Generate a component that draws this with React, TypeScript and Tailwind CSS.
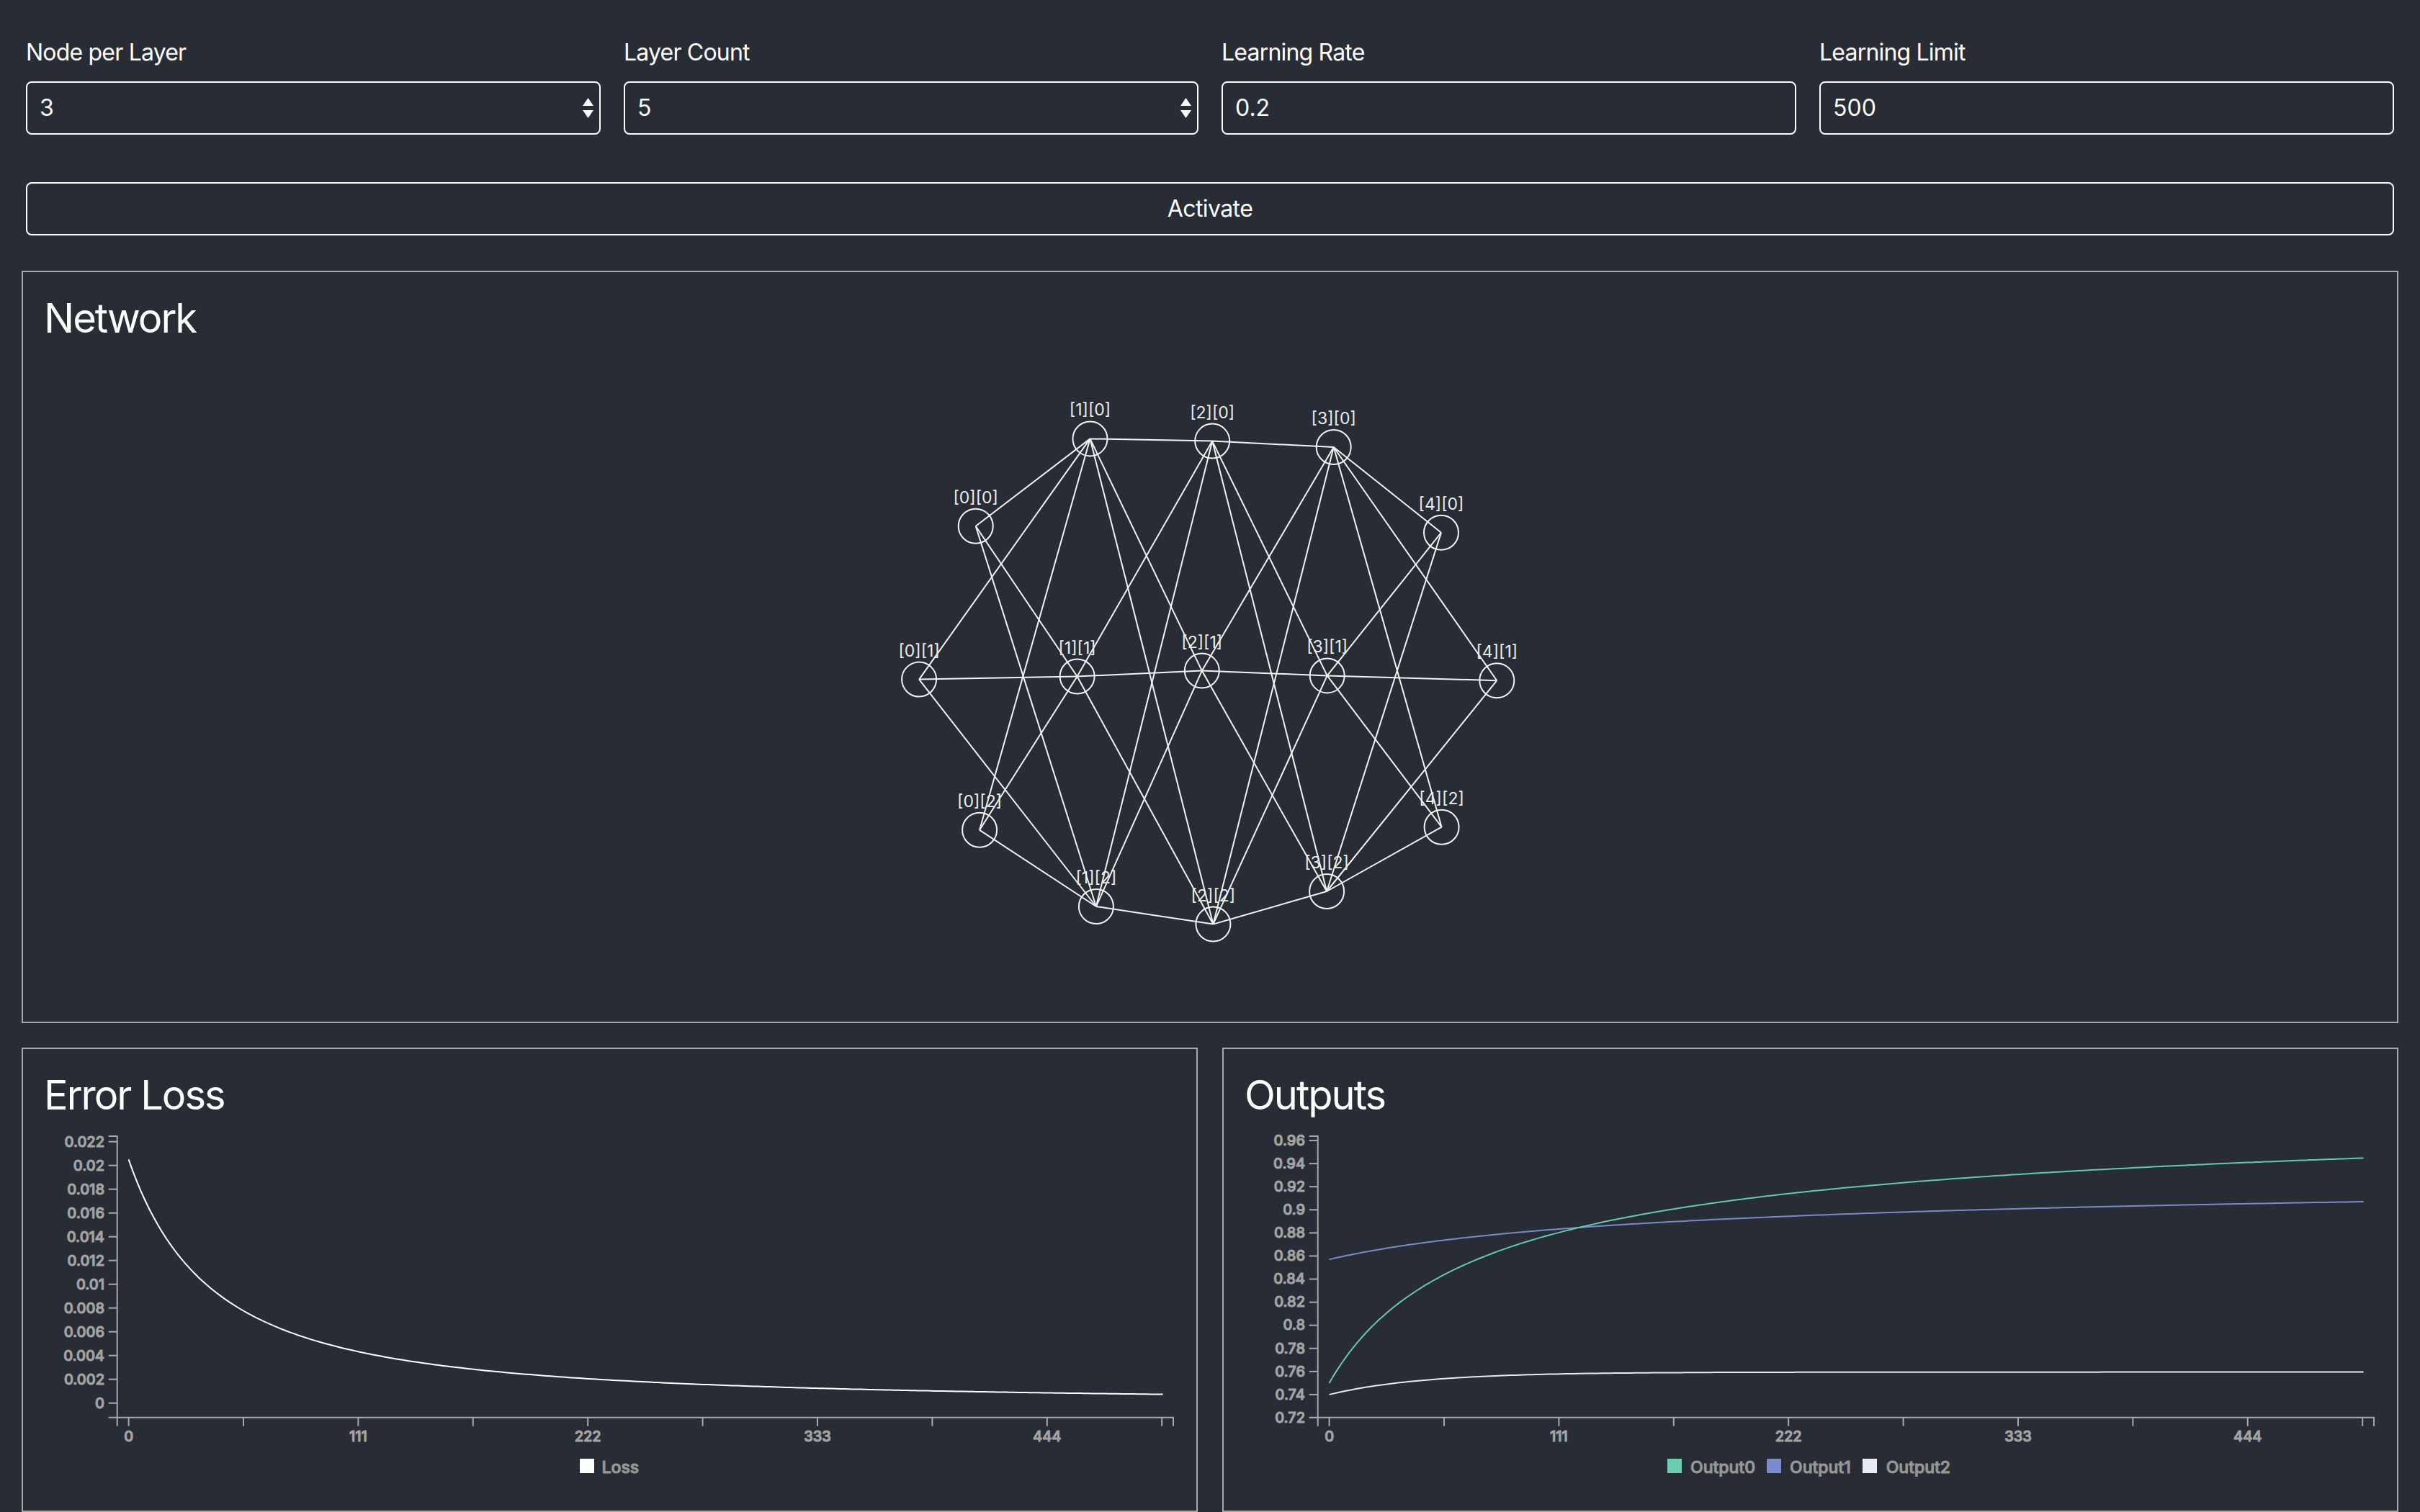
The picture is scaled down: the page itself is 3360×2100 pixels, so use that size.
import React from 'react'

type Pt = [number, number]

const NODES: Pt[][] = [
  [
    [1322.7, 256.8],
    [1244.1, 469.6],
    [1328.1, 678.8],
  ],
  [
    [1481.5, 135.4],
    [1463.6, 465.5],
    [1489.9, 785],
  ],
  [
    [1651.2, 138.6],
    [1636.8, 457.6],
    [1652.4, 809.6],
  ],
  [
    [1819.7, 147],
    [1810.7, 464.4],
    [1810.1, 764],
  ],
  [
    [1969, 265.7],
    [2046.3, 471.2],
    [1969.6, 674.7],
  ],
]

const AXIS = '#a8a8a8'
const TICK_TEXT = '#a3a3a3'

const xOf = (t: number) => 146.6 + t * 2.872

const steps = Array.from({ length: 251 }, (_, i) => i * 2)

const loss = (t: number) => 0.0205 / Math.pow(1 + t / 61, 1.5)
const out0 = (t: number) => 1 - 0.25 * Math.pow(1 + t / 50, -0.63)
const out1 = (t: number) =>
  0.857 + (0.05 * (1 - 1 / Math.sqrt(1 + t / 100))) / 0.5914
const out2 = (t: number) => 0.74 + 0.0195 * (1 - Math.exp(-t / 45))

const lossY = (v: number) => 395.7 - v * 16500
const outY = (v: number) => 416 - (v - 0.72) * 1604

function pathOf(fn: (t: number) => number, yOf: (v: number) => number) {
  return steps
    .map((t, i) => `${i ? 'L' : 'M'}${xOf(t).toFixed(1)},${yOf(fn(t)).toFixed(1)}`)
    .join('')
}

function SelectArrows() {
  return (
    <svg width="15" height="29" viewBox="0 0 15 29" className="shrink-0">
      <polygon points="0,11 7.5,0 15,11" fill="white" />
      <polygon points="0,17 15,17 7.5,28" fill="white" />
    </svg>
  )
}

function Field({
  label,
  value,
  select,
}: {
  label: string
  value: string
  select?: boolean
}) {
  return (
    <div className="flex flex-col">
      <div className="mb-[20px] text-[32px] leading-[40px] tracking-[-0.8px] text-white">
        {label}
      </div>
      <div className="flex h-[74px] items-center justify-between rounded-[8px] border-2 border-white pl-[17px] pr-[8px] text-[32px] text-white">
        <span>{value}</span>
        {select && <SelectArrows />}
      </div>
    </div>
  )
}

function Panel({
  title,
  className,
  children,
}: {
  title: string
  className?: string
  children: React.ReactNode
}) {
  return (
    <div className={`flex flex-col border-2 border-[#a9a9a9] ${className ?? ''}`}>
      <h2 className="px-[29px] pt-[32px] text-[56px] leading-[64px] font-normal tracking-[-2px] text-white">
        {title}
      </h2>
      {children}
    </div>
  )
}

function NetworkGraph() {
  const edges: [Pt, Pt][] = []
  for (let l = 0; l < NODES.length - 1; l++) {
    for (const a of NODES[l]) {
      for (const b of NODES[l + 1]) edges.push([a, b])
    }
  }
  return (
    <svg width="3296" height="943" viewBox="0 0 3296 943" className="block">
      {edges.map(([a, b], i) => (
        <line key={i} x1={a[0]} y1={a[1]} x2={b[0]} y2={b[1]} stroke="#f2f2f2" strokeWidth={2} />
      ))}
      {NODES.map((layer, l) =>
        layer.map((n, k) => (
          <g key={`${l}-${k}`}>
            <circle cx={n[0]} cy={n[1]} r={24} fill="none" stroke="#f2f2f2" strokeWidth={2} />
            <text
              x={n[0]}
              y={n[1] - 32}
              textAnchor="middle"
              fill="#ececec"
              fontSize={23}
              fontFamily="Inter, sans-serif"
            >
              {`[${l}][${k}]`}
            </text>
          </g>
        )),
      )}
    </svg>
  )
}

type Series = { color: string; d: string }
type Legend = { color: string; label: string; x: number; tx: number }

function Chart({
  yTicks,
  series,
  legend,
}: {
  yTicks: { y: number; label: string }[]
  series: Series[]
  legend: Legend[]
}) {
  const xTicks = Array.from({ length: 10 }, (_, i) => i * 55.5)
  return (
    <svg width="1629" height="543" viewBox="0 0 1629 543" className="block">
      <g fontFamily="Inter, sans-serif" fontSize={20} fontWeight={500}>
        <path d="M118.7,25H130.7V415.7H118.7" fill="none" stroke={AXIS} strokeWidth={2} />
        {yTicks.map((t) => (
          <g key={t.label}>
            <line x1={118.7} x2={130.7} y1={t.y} y2={t.y} stroke={AXIS} strokeWidth={2} />
            <text
              x={113}
              y={t.y}
              dy="0.34em"
              textAnchor="end"
              fill={TICK_TEXT}
              stroke={TICK_TEXT}
              strokeWidth={1.1}
            >
              {t.label}
            </text>
          </g>
        ))}
        <path d="M130.7,427.7V415.7H1597V427.7" fill="none" stroke={AXIS} strokeWidth={2} />
        {xTicks.map((v, i) => (
          <g key={v}>
            <line x1={xOf(v)} x2={xOf(v)} y1={415.7} y2={427.7} stroke={AXIS} strokeWidth={2} />
            {i % 2 === 0 && i < 9 && (
              <text
                x={xOf(v)}
                y={448.7}
                textAnchor="middle"
                fill={TICK_TEXT}
                stroke={TICK_TEXT}
                strokeWidth={1.1}
              >
                {Math.floor(v)}
              </text>
            )}
          </g>
        ))}
        {series.map((s) => (
          <path key={s.color} d={s.d} fill="none" stroke={s.color} strokeWidth={2} />
        ))}
        {legend.map((l) => (
          <g key={l.label}>
            <rect x={l.x} y={473} width={20} height={20} fill={l.color} />
            <text
              x={l.tx}
              y={492.7}
              fontSize={23}
              fill="#979797"
              stroke="#979797"
              strokeWidth={1}
            >
              {l.label}
            </text>
          </g>
        ))}
      </g>
    </svg>
  )
}

export default function App() {
  const lossTicks = Array.from({ length: 12 }, (_, i) => {
    const v = i * 0.002
    return { y: lossY(v), label: i === 0 ? '0' : String(+v.toFixed(3)) }
  })
  const outTicks = Array.from({ length: 13 }, (_, i) => {
    const v = 0.72 + i * 0.02
    return { y: outY(v), label: String(+v.toFixed(2)) }
  })

  return (
    <div className="min-h-screen w-full bg-[#282c34] pt-[53px] font-[Inter,sans-serif] text-white">
      <div className="grid grid-cols-4 gap-[32px] px-[36px]">
        <Field label="Node per Layer" value="3" select />
        <Field label="Layer Count" value="5" select />
        <Field label="Learning Rate" value="0.2" />
        <Field label="Learning Limit" value="500" />
      </div>

      <div className="mt-[66px] px-[36px]">
        <button className="h-[74px] w-full rounded-[8px] border-2 border-white text-[32px] tracking-[-0.6px] text-white">
          Activate
        </button>
      </div>

      <div className="mt-[49px] px-[30px]">
        <Panel title="Network" className="h-[1045px]">
          <NetworkGraph />
        </Panel>
      </div>

      <div className="mt-[34px] grid grid-cols-2 gap-[34px] px-[30px]">
        <Panel title="Error Loss" className="h-[645px]">
          <Chart
            yTicks={lossTicks}
            series={[{ color: '#ffffff', d: pathOf(loss, lossY) }]}
            legend={[{ color: '#ffffff', label: 'Loss', x: 773, tx: 803.5 }]}
          />
        </Panel>
        <Panel title="Outputs" className="h-[645px]">
          <Chart
            yTicks={outTicks}
            series={[
              { color: '#e6e8f5', d: pathOf(out2, outY) },
              { color: '#7b89c9', d: pathOf(out1, outY) },
              { color: '#66c9a9', d: pathOf(out0, outY) },
            ]}
            legend={[
              { color: '#6bcdb0', label: 'Output0', x: 616, tx: 648 },
              { color: '#7b8acb', label: 'Output1', x: 754, tx: 786 },
              { color: '#e8eaf6', label: 'Output2', x: 887, tx: 919.7 },
            ]}
          />
        </Panel>
      </div>
    </div>
  )
}
